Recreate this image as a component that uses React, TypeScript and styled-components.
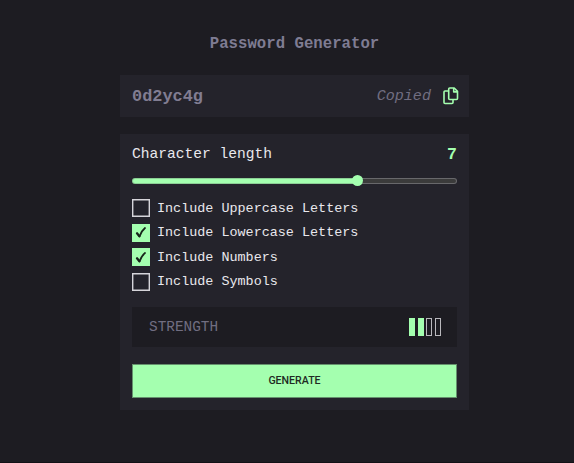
import React, { useState } from "react";
import styled, { createGlobalStyle } from "styled-components";

const mono = `"Courier New", "Liberation Mono", monospace`;

const GlobalStyle = createGlobalStyle`
  * { box-sizing: border-box; }
  body { margin: 0; background: #1d1c22; overflow: hidden; }
`;

const Page = styled.main`
  height: 463px;
  padding-left: 15px;
  display: flex;
  flex-direction: column;
  align-items: center;
  background: #1d1c22;
  border-bottom: 1px solid #121116;
  font-family: ${mono};
`;

const Title = styled.h1`
  margin: 35px 0 21px;
  font-size: 15.7px;
  line-height: 19px;
  font-weight: 700;
  color: #7f7c93;
`;

const PasswordCard = styled.section`
  width: 349px;
  height: 42px;
  padding: 0 10px 0 12px;
  display: flex;
  align-items: center;
  background: #24232b;
`;

const Password = styled.span`
  flex: 1;
  font-size: 16.9px;
  font-weight: 700;
  color: #817d92;
`;

const Copied = styled.em`
  margin-right: 12px;
  font-size: 15.1px;
  color: #716e81;
`;

const CopyButton = styled.button`
  display: flex;
  padding: 0;
  border: 0;
  background: none;
  color: #a4ffaf;
`;

const Panel = styled.section`
  width: 349px;
  height: 276px;
  margin-top: 17px;
  padding: 10px 12px 12px;
  display: flex;
  flex-direction: column;
  background: #24232b;
`;

const LengthRow = styled.div`
  height: 20px;
  display: flex;
  align-items: center;
  justify-content: space-between;
  font-size: 14.6px;
  color: #e9e8ed;
`;

const LengthValue = styled.strong`
  font-size: 16.5px;
  color: #a4ffaf;
`;

const Slider = styled.input<{ $fill: number }>`
  appearance: none;
  width: 325px;
  height: 12px;
  margin: 11px 0 12px;
  background: none;
  &::-webkit-slider-runnable-track {
    height: 6px;
    border: 1px solid transparent;
    border-radius: 4px;
    background:
      linear-gradient(to right, #a4ffaf ${p => p.$fill}%, #3b3b3b ${p => p.$fill}%) padding-box,
      linear-gradient(to right, #8bcf94 ${p => p.$fill}%, #68686b ${p => p.$fill}%) border-box;
  }
  &::-webkit-slider-thumb {
    appearance: none;
    position: relative;
    left: 1px;
    width: 11px;
    height: 11px;
    margin-top: -4px;
    border-radius: 50%;
    background: #a4ffaf;
  }
`;

const Options = styled.div`
  display: flex;
  flex-direction: column;
  gap: 6.67px;
`;

const Option = styled.label`
  height: 18px;
  display: flex;
  align-items: center;
  gap: 7px;
  font-size: 13.43px;
  color: #e9e8ed;
`;

const CheckInput = styled.input`
  appearance: none;
  position: absolute;
  opacity: 0;
`;

const Box = styled.span<{ $checked: boolean }>`
  width: 18px;
  height: 18px;
  display: flex;
  align-items: center;
  justify-content: center;
  box-shadow: inset 0 0 0 1.4px ${p => (p.$checked ? "#a4ffaf" : "#d6d5da")};
  background: ${p => (p.$checked ? "#a4ffaf" : "transparent")};
`;

const Strength = styled.div`
  height: 40px;
  margin-top: 16px;
  padding: 0 16px 0 17px;
  display: flex;
  align-items: center;
  justify-content: space-between;
  background: #1d1c22;
  color: #716e81;
  font-size: 14.4px;
`;

const Bars = styled.div`
  display: flex;
  gap: 2.6px;
`;

const Bar = styled.span<{ $on: boolean }>`
  width: 6px;
  height: 18px;
  border: 1px solid ${p => (p.$on ? "#a4ffaf" : "#b9b8bd")};
  background: ${p => (p.$on ? "#a4ffaf" : "transparent")};
`;

const Generate = styled.button`
  height: 34px;
  margin-top: 17px;
  padding: 0;
  border: 1px solid #65916d;
  background: #a4ffaf;
  color: #202a23;
  font: 500 10.6px Roboto, sans-serif;
`;

const CopyIcon = () => (
  <svg width="16" height="18" viewBox="0 0 16 18" fill="none" stroke="currentColor" strokeWidth="1.6" strokeLinejoin="round">
    <path d="M6.7 1h4.5l3.3 3.4v7.1a1 1 0 0 1-1 1H6.7a1 1 0 0 1-1-1V2a1 1 0 0 1 1-1Z" />
    <path d="M10.7 1v3.9h3.8" />
    <path d="M5.7 4H2a1 1 0 0 0-1 1v10.5a1 1 0 0 0 1 1h7a1 1 0 0 0 1-1v-3" />
  </svg>
);

const CheckIcon = () => (
  <svg width="12" height="13" viewBox="0 0 12 13" fill="none" stroke="#17241a">
    <path d="M2 7.3 4.4 10.2" strokeWidth="2.3" strokeLinecap="round" />
    <path d="M4.5 10.3C5.9 6.7 7.5 4 10 2" strokeWidth="1.8" strokeLinecap="round" />
  </svg>
);

const labels = ["Uppercase Letters", "Lowercase Letters", "Numbers", "Symbols"];

export default function App() {
  const [length, setLength] = useState(7);
  const [checked, setChecked] = useState([false, true, true, false]);
  const toggle = (index: number) =>
    setChecked(checked.map((value, i) => (i === index ? !value : value)));

  return (
    <>
      <GlobalStyle />
      <Page>
        <Title>Password Generator</Title>
        <PasswordCard>
          <Password>0d2yc4g</Password>
          <Copied>Copied</Copied>
          <CopyButton aria-label="Copy password"><CopyIcon /></CopyButton>
        </PasswordCard>
        <Panel>
          <LengthRow>
            <span>Character length</span>
            <LengthValue>{length}</LengthValue>
          </LengthRow>
          <Slider type="range" min={0} max={10} value={length} $fill={length * 10}
            onChange={e => setLength(Number(e.target.value))} />
          <Options>
            {labels.map((label, i) => (
              <Option key={label}>
                <CheckInput type="checkbox" checked={checked[i]} onChange={() => toggle(i)} />
                <Box $checked={checked[i]}>{checked[i] && <CheckIcon />}</Box>
                <span>Include {label}</span>
              </Option>
            ))}
          </Options>
          <Strength>
            <span>STRENGTH</span>
            <Bars>{[0, 1, 2, 3].map(i => <Bar key={i} $on={i < 2} />)}</Bars>
          </Strength>
          <Generate>GENERATE</Generate>
        </Panel>
      </Page>
    </>
  );
}
